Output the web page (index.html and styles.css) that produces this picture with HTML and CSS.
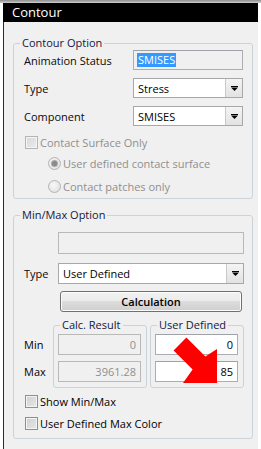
FILE: index.html
```html
<!DOCTYPE html>
<html>
<head>
<meta charset="utf-8">
<title>Contour</title>
<link rel="stylesheet" href="styles.css">
</head>
<body>
<div class="topshade"></div>
<div class="window">
  <div class="titlebar">Contour</div>
  <div class="client">
    <fieldset class="group g1">
      <legend>Contour Option</legend>
      <div class="row first">
        <span class="lbl">Animation Status</span>
        <div class="field readonly w110"><span class="hl">SMISES</span></div>
      </div>
      <div class="row">
        <span class="lbl">Type</span>
        <div class="combo w110"><span class="val">Stress</span><span class="btn"><svg width="7" height="5" viewBox="0 0 7 5"><rect x="0" y="0" width="7" height="1" fill="#000"/><path d="M0 1.5 H7 L3.5 5 Z" fill="#000"/></svg></span></div>
      </div>
      <div class="row">
        <span class="lbl">Component</span>
        <div class="combo w110"><span class="val">SMISES</span><span class="btn"><svg width="7" height="5" viewBox="0 0 7 5"><rect x="0" y="0" width="7" height="1" fill="#000"/><path d="M0 1.5 H7 L3.5 5 Z" fill="#000"/></svg></span></div>
      </div>
      <div class="check c-contact disabled">
        <span class="box"></span><span class="txt">Contact Surface Only</span>
      </div>
      <div class="check radio r1 disabled">
        <span class="circle on"></span><span class="txt">User defined contact surface</span>
      </div>
      <div class="check radio r2 disabled">
        <span class="circle"></span><span class="txt">Contact patches only</span>
      </div>
    </fieldset>

    <fieldset class="group g2">
      <legend>Min/Max Option</legend>
      <div class="field readonly empty"></div>
      <div class="row typerow">
        <span class="lbl short">Type</span>
        <div class="combo w186"><span class="val">User Defined</span><span class="btn"><svg width="7" height="5" viewBox="0 0 7 5"><rect x="0" y="0" width="7" height="1" fill="#000"/><path d="M0 1.5 H7 L3.5 5 Z" fill="#000"/></svg></span></div>
      </div>
      <div class="button">Calculation</div>
      <div class="minmax">
        <div class="mmlabels">
          <span class="mml">Min</span>
          <span class="mml">Max</span>
        </div>
        <fieldset class="sub">
          <legend>Calc. Result</legend>
          <div class="field readonly num dis">0</div>
          <div class="field readonly num dis second">3961.28</div>
        </fieldset>
        <fieldset class="sub">
          <legend>User Defined</legend>
          <div class="field num">0</div>
          <div class="field num second">85</div>
        </fieldset>
      </div>
      <div class="check c-show">
        <span class="box"></span><span class="txt">Show Min/Max</span>
      </div>
      <div class="check c-color">
        <span class="box"></span><span class="txt">User Defined Max Color</span>
      </div>
    </fieldset>
  </div>
</div>
<svg class="arrow" width="261" height="449" viewBox="0 0 261 449">
  <polygon points="186.4,337.6 205.4,356.6 217,349 217,383 183,383 192.6,369.4 173.6,350.4" fill="#ff0000"/>
</svg>
</body>
</html>
```

FILE: styles.css
```css
html, body {
  margin: 0;
  padding: 0;
}
body {
  width: 261px;
  height: 449px;
  background: #ffffff;
  font-family: "Open Sans", "Noto Sans", sans-serif;
  font-size: 11px;
  color: #000;
  position: relative;
  overflow: hidden;
}
.topshade {
  height: 3px;
  background: linear-gradient(#8c8c8c, #cfcfcf);
}
.window {
  margin-left: 3px;
  width: 255px;
  height: 446px;
  display: flex;
  flex-direction: column;
}
.titlebar {
  height: 19px;
  background: #000;
  color: #fff;
  font-size: 13px;
  line-height: 19px;
  padding-left: 9px;
}
.client {
  flex: 1;
  background: #f0f0f0;
  border-left: 1px solid #2b2b2b;
  padding: 13px 5px 0 9px;
  display: flex;
  flex-direction: column;
}
.group {
  margin: 0;
  min-width: 0;
  border: 1px solid #cad3da;
  border-radius: 3px;
  padding: 0 8px 0 10px;
  display: flex;
  flex-direction: column;
}
.group > legend {
  padding: 0 2px;
  margin-left: -4px;
  line-height: 16px;
  color: #14183a;
}
.g1 {
  padding-bottom: 5px;
}
.g2 {
  margin-top: 8px;
  padding-bottom: 8px;
}
.row {
  display: flex;
  align-items: center;
  height: 20px;
  margin-top: 8px;
}
.row.first {
  margin-top: -1px;
}
.lbl {
  width: 109px;
  flex: none;
  color: #0a0a0a;
}
.lbl.short {
  width: 34px;
}
.field {
  box-sizing: border-box;
  height: 20px;
  border: 1px solid #abadb3;
  border-top-color: #a0a2a8;
  background: #fff;
  display: flex;
  align-items: center;
  padding: 0 3px;
}
.field.readonly {
  background: #f0f0f0;
}
.w110 { width: 110px; }
.w186 { width: 186px; }
.hl {
  background: #3399ff;
  color: #fff;
  padding: 0 1px;
  line-height: 14px;
}
.combo {
  box-sizing: border-box;
  height: 20px;
  border: 1px solid #a8a8a8;
  background: #fff;
  display: flex;
  align-items: stretch;
}
.combo .val {
  flex: 1;
  display: flex;
  align-items: center;
  padding-left: 4px;
}
.combo .btn {
  width: 16px;
  border-left: 1px solid #c9c9c9;
  background: linear-gradient(#f4f4f4, #e2e2e2);
  display: flex;
  align-items: center;
  justify-content: center;
}
.check {
  display: flex;
  align-items: center;
  height: 14px;
  margin-top: 9px;
  margin-left: 1px;
}
.check .txt {
  margin-left: 2px;
}
.check.disabled .txt {
  color: #8f8f8f;
}
.box {
  box-sizing: border-box;
  width: 13px;
  height: 13px;
  border: 1px solid #8e8f8f;
  background: linear-gradient(135deg, #cfcfcf, #e8e8e8);
  box-shadow: inset 0 0 0 1px #f4f4f4;
}
.check.disabled .box {
  border-color: #b5b5b5;
  background: linear-gradient(135deg, #d8d8d8, #ececec);
}
.radio {
  margin-left: 24px;
}
.radio.r1 {
  margin-top: 7px;
}
.circle {
  box-sizing: border-box;
  width: 13px;
  height: 13px;
  border-radius: 50%;
  border: 1px solid #b3b3b3;
  background: radial-gradient(circle at 40% 40%, #f8f8f8, #dcdcdc);
  display: flex;
  align-items: center;
  justify-content: center;
}
.circle.on::after {
  content: "";
  width: 5px;
  height: 5px;
  border-radius: 50%;
  background: #8a8a8a;
  box-shadow: 0 0 0 1px #a9a9a9;
}
.radio .txt {
  margin-left: 2px;
}
.empty {
  width: 186px;
  height: 22px;
  margin-left: 34px;
  margin-top: 9px;
  border-color: #b9b9b9;
}
.typerow {
  height: 21px;
  margin-top: 9px;
}
.typerow .combo {
  height: 21px;
}
.button {
  box-sizing: border-box;
  width: 182px;
  height: 21px;
  margin: 7px 0 0 36px;
  border: 1px solid #707070;
  border-radius: 3px;
  background: linear-gradient(#f2f2f2 0%, #ebebeb 49%, #dddddd 50%, #cfcfcf 100%);
  box-shadow: inset 0 0 0 1px #fcfcfc;
  display: flex;
  align-items: center;
  justify-content: center;
  font-weight: 600;
}
.minmax {
  display: flex;
  margin-top: 5px;
}
.mmlabels {
  width: 29px;
  flex: none;
  display: flex;
  flex-direction: column;
  padding-top: 17px;
}
.mml {
  height: 21px;
  line-height: 21px;
  margin-bottom: 6px;
}
.sub {
  margin: 0;
  min-width: 0;
  width: 94px;
  box-sizing: border-box;
  border: 1px solid #cad3da;
  border-radius: 3px;
  padding: 0 5px 4px 4px;
  display: flex;
  flex-direction: column;
}
.sub + .sub {
  margin-left: 3px;
}
.sub > legend {
  padding: 0 2px;
  margin-left: 2px;
  line-height: 16px;
  color: #14183a;
}
.num {
  height: 21px;
  margin-top: 1px;
  justify-content: flex-end;
  padding-right: 4px;
}
.num.second {
  margin-top: 6px;
}
.num.dis {
  color: #8f8f8f;
  border-color: #b9b9b9;
}
.c-show {
  margin-top: 6px;
}
.c-color {
  margin-top: 8px;
}
.arrow {
  position: absolute;
  left: 0;
  top: 0;
  pointer-events: none;
}
```
